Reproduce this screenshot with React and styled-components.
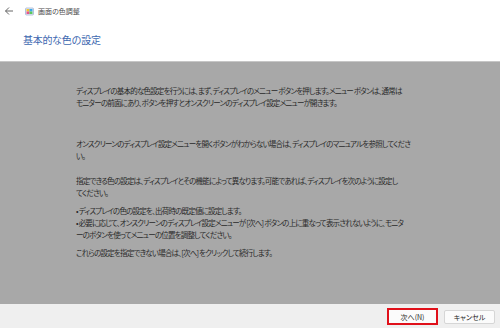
import React from "react";
import styled, { createGlobalStyle } from "styled-components";

const GlobalStyle = createGlobalStyle`
  html, body { margin: 0; padding: 0; }
  body {
    width: 500px;
    height: 328px;
    overflow: hidden;
    background: #ffffff;
    font-family: "Noto Sans CJK JP", "Noto Sans", sans-serif;
  }
`;

const Window = styled.div`
  width: 500px;
  height: 328px;
  display: flex;
  flex-direction: column;
`;

const TitleBar = styled.div`
  height: 22px;
  display: flex;
  align-items: center;
  padding-left: 4px;
  gap: 7px;
`;

const BackArrow = styled.svg`
  width: 10px;
  height: 10px;
`;

const AppIcon = styled.svg`
  width: 9px;
  height: 9px;
  margin-left: 4px;
`;

const TitleText = styled.span`
  font-size: 7px;
  color: #4a4a4a;
  margin-left: -3px;
  font-feature-settings: "palt";
`;

const Header = styled.div`
  height: 39px;
  display: flex;
  align-items: center;
  padding-left: 23px;
`;

const Heading = styled.h1`
  margin: 0;
  margin-top: -4px;
  font-size: 10px;
  font-weight: 400;
  color: #3d68b0;
  letter-spacing: -0.3px;
`;

const Panel = styled.div`
  flex: 1;
  background: #a8a8a8;
  border-top: 1px solid #c6c6c6;
  padding: 23px 0 0 76px;
  color: #2a2a2a;
  font-size: 7.5px;
  line-height: 12px;
  font-feature-settings: "palt";
  letter-spacing: -0.8px;
  white-space: nowrap;
`;

const Para = styled.p`
  margin: 0 0 ${(p) => p.gap || 13}px 0;
`;

const Bullet = styled.div``;

const Footer = styled.div`
  height: 24px;
  background: #efefef;
  display: flex;
  align-items: center;
  justify-content: flex-end;
  gap: 6px;
  padding-right: 5px;
`;

const Button = styled.button`
  height: ${(p) => (p.focused ? 17 : 14)}px;
  width: 51px;
  padding: 0;
  margin-top: 1px;
  background: #fbfbfb;
  border: ${(p) => (p.focused ? "2px solid #e0101a" : "1px solid #d6d6d6")};
  border-radius: ${(p) => (p.focused ? 0 : 2)}px;
  font-family: "Noto Sans CJK JP", "Noto Sans", sans-serif;
  font-size: 7px;
  color: #222;
  font-feature-settings: "palt";
  display: flex;
  align-items: center;
  justify-content: center;
`;

export default function App() {
  return (
    <>
      <GlobalStyle />
      <Window>
        <TitleBar>
          <BackArrow viewBox="0 0 10 10">
            <path d="M9 5H1.5M5 1.5L1.5 5L5 8.5" fill="none" stroke="#555" strokeWidth="0.9" />
          </BackArrow>
          <AppIcon viewBox="0 0 9 9">
            <rect x="0.5" y="1" width="8" height="7" rx="1" fill="#e8eef8" stroke="#8aa0c8" strokeWidth="0.6" />
            <rect x="1.5" y="2" width="3" height="2.5" fill="#f2c233" />
            <rect x="4.5" y="2" width="3" height="2.5" fill="#3aa7e8" />
            <rect x="1.5" y="4.5" width="3" height="2.5" fill="#e8548c" />
            <rect x="4.5" y="4.5" width="3" height="2.5" fill="#5bc85b" />
          </AppIcon>
          <TitleText>画面の色調整</TitleText>
        </TitleBar>
        <Header>
          <Heading>基本的な色の設定</Heading>
        </Header>
        <Panel>
          <Para gap={29}>
            ディスプレイの基本的な色設定を行うには、まず、ディスプレイのメニュー ボタンを押します。メニュー ボタンは、通常は
            <br />
            モニターの前面にあり、ボタンを押すとオンスクリーンのディスプレイ設定メニューが開きます。
          </Para>
          <Para>
            オンスクリーンのディスプレイ設定メニューを開くボタンがわからない場合は、ディスプレイのマニュアルを参照してくださ
            <br />
            い。
          </Para>
          <Para gap={6}>
            指定できる色の設定は、ディスプレイとその機能によって異なります。可能であれば、ディスプレイを次のように設定し
            <br />
            てください。
          </Para>
          <Para gap={6}>
            <Bullet>• ディスプレイの色の設定を、出荷時の既定値に設定します。</Bullet>
            <Bullet>
              • 必要に応じて、オンスクリーンのディスプレイ設定メニューが [次へ] ボタンの上に重なって表示されないように、モニタ
              <br />
              ーのボタンを使ってメニューの位置を調整してください。
            </Bullet>
          </Para>
          <Para>これらの設定を指定できない場合は、[次へ] をクリックして続行します。</Para>
        </Panel>
        <Footer>
          <Button focused>次へ(N)</Button>
          <Button>キャンセル</Button>
        </Footer>
      </Window>
    </>
  );
}
